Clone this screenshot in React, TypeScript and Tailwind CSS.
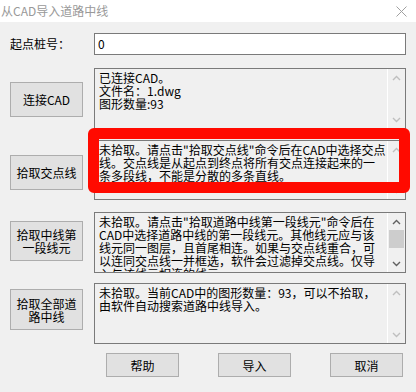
import React from 'react';

const Chevron: React.FC<{ up?: boolean; color: string }> = ({ up, color }) => (
  <svg width="9" height="6" viewBox="0 0 9 6">
    <path d={up ? 'M1 5 L4.5 1.5 L8 5' : 'M1 1 L4.5 4.5 L8 1'} stroke={color} strokeWidth="1.4" fill="none" />
  </svg>
);

const ScrollBar: React.FC<{ enabled?: boolean }> = ({ enabled }) => {
  const c = enabled ? '#606060' : '#bfbfbf';
  return (
    <div className="w-[18px] shrink-0 border-l border-white flex flex-col">
      <div className="h-[17px] flex items-center justify-center">
        <Chevron up color={c} />
      </div>
      <div className="flex-1 px-[1px]">
        {enabled && <div className="h-[18px] bg-[#cdcdcd]" />}
      </div>
      <div className="h-[17px] flex items-center justify-center">
        <Chevron color={c} />
      </div>
    </div>
  );
};

const TextBox: React.FC<{ lines: string[]; size: string; enabled?: boolean }> = ({ lines, size, enabled }) => (
  <div className={`w-[312px] border border-[#7a7a7a] bg-[#f0f0f0] flex overflow-hidden ${size}`}>
    <div className="flex-1 pl-[4px] pt-[2px] leading-[13px] text-black overflow-hidden">
      {lines.map((l, i) => (
        <div key={i} className="whitespace-nowrap">{l}</div>
      ))}
    </div>
    <ScrollBar enabled={enabled} />
  </div>
);

const Btn: React.FC<{ children: React.ReactNode; className: string }> = ({ children, className }) => (
  <div className={`w-[73px] shrink-0 bg-[#e1e1e1] border border-[#adadad] flex items-center justify-center text-center leading-[13px] text-black ${className}`}>
    {children}
  </div>
);

export default function App() {
  return (
    <div className="relative w-[416px] h-[392px] bg-[#f0f0f0] overflow-hidden text-[12px] font-['Noto_Sans_CJK_SC',sans-serif]">
      <div className="h-[22px] bg-white flex items-center justify-between pl-[1px] pr-[9px]">
        <span className="text-[#999999]">从CAD导入道路中线</span>
        <svg width="11" height="11" viewBox="0 0 11 11">
          <path d="M0.5 0.5 L10.5 10.5 M10.5 0.5 L0.5 10.5" stroke="#a0a0a0" strokeWidth="1" />
        </svg>
      </div>

      <div className="px-[10px]">
        <div className="flex items-center mt-[11px]">
          <div className="w-[84px] text-black">起点桩号：</div>
          <div className="w-[312px] h-[22px] border border-[#7a7a7a] bg-white pl-[3px] flex items-center text-black">0</div>
        </div>

        <div className="flex items-start gap-[11px] mt-[13px]">
          <Btn className="h-[35px] mt-[14px]">连接CAD</Btn>
          <TextBox size="h-[61px]" lines={['已连接CAD。', '文件名：1.dwg', '图形数量:93']} />
        </div>

        <div className="flex items-start gap-[11px] mt-[11px]">
          <Btn className="h-[35px] mt-[15px]">拾取交点线</Btn>
          <TextBox
            size="h-[60px]"
            lines={[
              '未拾取。请点击"拾取交点线"命令后在CAD中选择交点',
              '线。交点线是从起点到终点将所有交点连接起来的一',
              '条多段线，不能是分散的多条直线。',
            ]}
          />
        </div>

        <div className="flex items-start gap-[11px] mt-[12px]">
          <Btn className="h-[40px] mt-[9px]">
            拾取中线第
            <br />
            一段线元
          </Btn>
          <TextBox
            size="h-[61px]"
            enabled
            lines={[
              '未拾取。请点击"拾取道路中线第一段线元"命令后在',
              'CAD中选择道路中线的第一段线元。其他线元应与该',
              '线元同一图层，且首尾相连。如果与交点线重合，可',
              '以连同交点线一并框选，软件会过滤掉交点线。仅导',
              '入与该线元相连的线元。',
            ]}
          />
        </div>

        <div className="flex items-start gap-[11px] mt-[10px]">
          <Btn className="h-[41px] mt-[6px]">
            拾取全部道
            <br />
            路中线
          </Btn>
          <TextBox
            size="h-[61px]"
            lines={['未拾取。当前CAD中的图形数量：93，可以不拾取，', '由软件自动搜索道路中线导入。']}
          />
        </div>

        <div className="flex ml-[96px] gap-[39px] mt-[9px]">
          <Btn className="h-[24px]">帮助</Btn>
          <Btn className="h-[24px]">导入</Btn>
          <Btn className="h-[24px]">取消</Btn>
        </div>
      </div>

      <div className="absolute left-[88px] top-[128px] w-[322px] h-[65px] border-[11px] border-[#ff0a00] rounded-[6px]" />
    </div>
  );
}
